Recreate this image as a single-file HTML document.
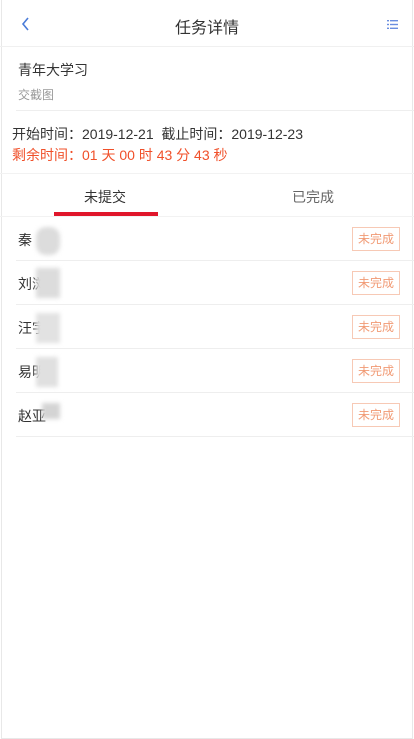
<!DOCTYPE html>
<html><head><meta charset="utf-8"><style>
*{margin:0;padding:0;box-sizing:border-box}
body{width:414px;height:739px;background:#fff;font-family:"Liberation Sans","Noto Sans CJK SC",sans-serif;position:relative;overflow:hidden}
.frame{position:absolute;left:1px;top:0;width:412px;height:739px;border:1px solid #e8e8e8;border-top:none}
.hdr{position:absolute;top:0;left:0;width:414px;height:47px;border-bottom:1px solid #f0f0f0}
.hdr .t{position:absolute;left:0;right:0;top:14px;text-align:center;font-size:16px;color:#333}
.abs{position:absolute;white-space:nowrap}
.row{position:absolute;left:16px;right:0;height:44px;border-bottom:1px solid #eeeeee}
.row .n{position:absolute;left:2px;top:13px;font-size:14px;color:#333}
.row .b{position:absolute;right:14px;top:10px;width:48px;height:24px;border:1px solid #f7c9b5;color:#f19a74;font-size:12px;text-align:center;line-height:22px}
.blur{position:absolute;background:#dcdcdc;filter:blur(2px)}
</style></head><body>
<div class="frame"></div>
<div class="hdr">
 <svg class="abs" style="left:21px;top:17px" width="10" height="14" viewBox="0 0 10 14"><path d="M7 1 L2 7 L7 13" stroke="#4a7bd8" stroke-width="1.6" fill="none"/></svg>
 <div class="t">任务详情</div>
 <svg class="abs" style="left:387px;top:20px" width="11" height="9" viewBox="0 0 11 9"><g fill="#6a8ee0"><rect x="0" y="0" width="2" height="1.4"/><rect x="3" y="0" width="8" height="1.4"/><rect x="0" y="3.8" width="2" height="1.4"/><rect x="3" y="3.8" width="8" height="1.4"/><rect x="0" y="7.6" width="2" height="1.4"/><rect x="3" y="7.6" width="8" height="1.4"/></g></svg>
</div>
<div class="abs" style="left:18px;top:60px;font-size:14px;color:#333">青年大学习</div>
<div class="abs" style="left:18px;top:86px;font-size:12px;color:#999">交截图</div>
<div class="abs" style="left:16px;top:110px;width:398px;height:1px;background:#eee"></div>
<div class="abs" style="left:12px;top:124px;font-size:14px;color:#333">开始时间：2019-12-21&nbsp;&nbsp;截止时间：2019-12-23</div>
<div class="abs" style="left:12px;top:145px;font-size:14px;color:#f0502a">剩余时间：01 天 00 时 43 分 43 秒</div>
<div class="abs" style="left:0;top:173px;width:414px;height:1px;background:#f2f2f2"></div>
<div class="abs" style="left:84px;top:187px;font-size:14px;color:#333">未提交</div>
<div class="abs" style="left:292px;top:187px;font-size:14px;color:#666">已完成</div>
<div class="abs" style="left:54px;top:212px;width:104px;height:4px;background:#e0162b"></div>
<div class="abs" style="left:0;top:216px;width:414px;height:1px;background:#f2f2f2"></div>

<div class="row" style="top:217px"><div class="n">秦</div><div class="blur" style="left:20px;top:10px;width:24px;height:28px;border-radius:10px"></div><div class="b">未完成</div></div>
<div class="row" style="top:261px"><div class="n">刘浏</div><div class="blur" style="left:20px;top:7px;width:24px;height:30px"></div><div class="b">未完成</div></div>
<div class="row" style="top:305px"><div class="n">汪宇</div><div class="blur" style="left:20px;top:8px;width:24px;height:30px;background:#e2e2e2"></div><div class="b">未完成</div></div>
<div class="row" style="top:349px"><div class="n">易明</div><div class="blur" style="left:20px;top:8px;width:22px;height:30px;background:#e0e0e0"></div><div class="b">未完成</div></div>
<div class="row" style="top:393px"><div class="n">赵亚</div><div class="blur" style="left:26px;top:10px;width:18px;height:16px;background:#d4d4d4"></div><div class="b">未完成</div></div>
</body></html>
